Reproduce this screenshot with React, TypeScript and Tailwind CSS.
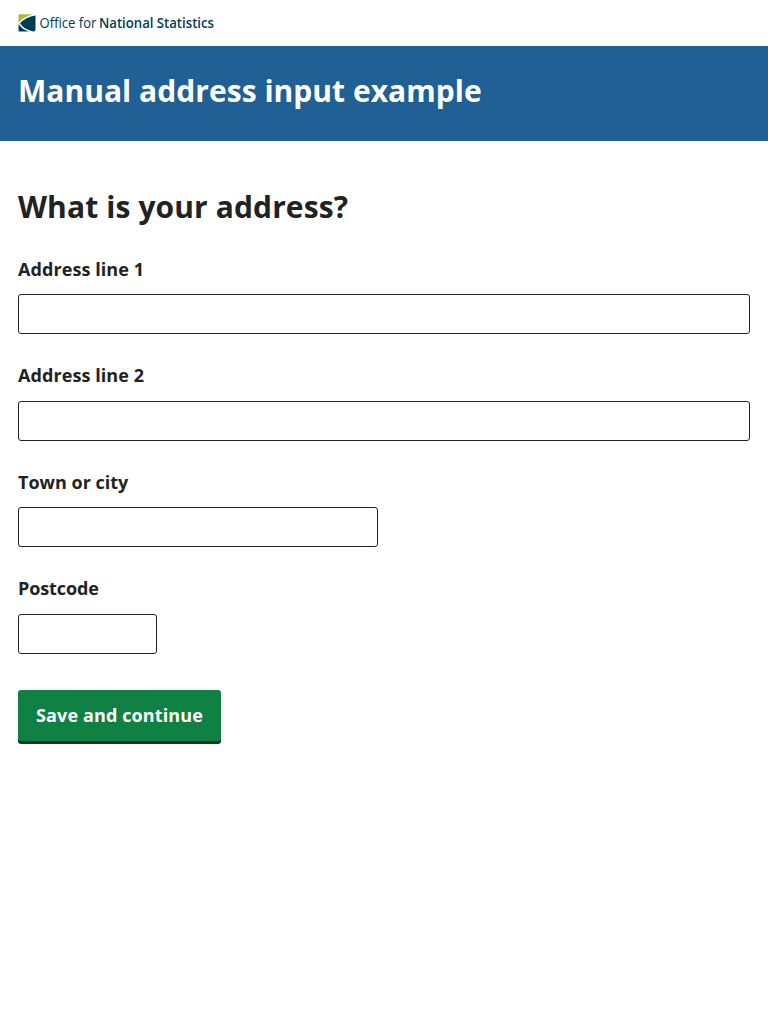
import React from "react";

type FieldProps = { id: string; label: string; width: string; tracking: string };

function Field({ id, label, width, tracking }: FieldProps) {
  return (
    <div className="mb-[26.2px]">
      <label htmlFor={id} className={`mb-[10.4px] block text-[18px] font-bold leading-[30px] ${tracking}`}>
        {label}
      </label>
      <input
        id={id}
        type="text"
        className={`block h-10 rounded-[3px] border border-[#222222] bg-white px-2 ${width}`}
      />
    </div>
  );
}

function Logo() {
  return (
    <svg width="204" height="24" viewBox="0 -3 204 24" className="overflow-visible" role="img" aria-label="Office for National Statistics">
      <path d="M1.500 .3H15.500C8.500 2 3.800 5 .5 8.700V1.300Q.5.3 1.500 .3Z" fill="#a8bd3a" />
      <path d="M17.500 1.500V15.500Q17.500 17.400 15.500 17.400C9.500 16.500 4.800 13.500 2 9.300C5.500 5.500 11 2.500 17.500 1.500Z" fill="#003c57" />
      <path d="M.5 10C3 13.700 6.500 16.300 11 17.400H1.500Q.5 17.400 .5 16.400Z" fill="#003c57" />
      <g fill="#003c57" fontFamily="Open Sans, sans-serif" fontSize="14.5">
        <text transform="translate(21.6 14) scale(.9 1)">Office for</text>
        <text transform="translate(81 14) scale(.907 1)" fontWeight="600">National Statistics</text>
      </g>
    </svg>
  );
}

export default function App() {
  return (
    <div className="min-h-screen bg-white font-['Open_Sans',sans-serif] text-[#222222]">
      <header>
        <div className="flex h-[46px] items-center px-[18px]">
          <Logo />
        </div>
        <div className="h-[95px] bg-[#206095] px-[18px] pt-[25px]">
          <h1 className="text-[30px] font-bold leading-10 tracking-[0.03px] text-white">Manual address input example</h1>
        </div>
      </header>
      <main className="px-[18px] pt-[46px]">
        <h2 className="mb-[26.6px] text-[30px] font-bold leading-10 tracking-[0.11px]">What is your address?</h2>
        <form onSubmit={(e) => e.preventDefault()}>
          <Field id="line1" label="Address line 1" width="w-full" tracking="tracking-[0.08px]" />
          <Field id="line2" label="Address line 2" width="w-full" tracking="tracking-[0.08px]" />
          <Field id="town" label="Town or city" width="w-[360px]" tracking="tracking-normal" />
          <Field id="postcode" label="Postcode" width="w-[139px]" tracking="tracking-[-0.1px]" />
          <div className="pt-[10px]">
            <button
              type="submit"
              className="block h-[51px] w-[203px] whitespace-nowrap rounded-[3px] bg-[#0f8243] text-[18px] font-bold tracking-[0.12px] text-white shadow-[0_3px_0_#073d20]"
            >
              Save and continue
            </button>
          </div>
        </form>
      </main>
    </div>
  );
}
